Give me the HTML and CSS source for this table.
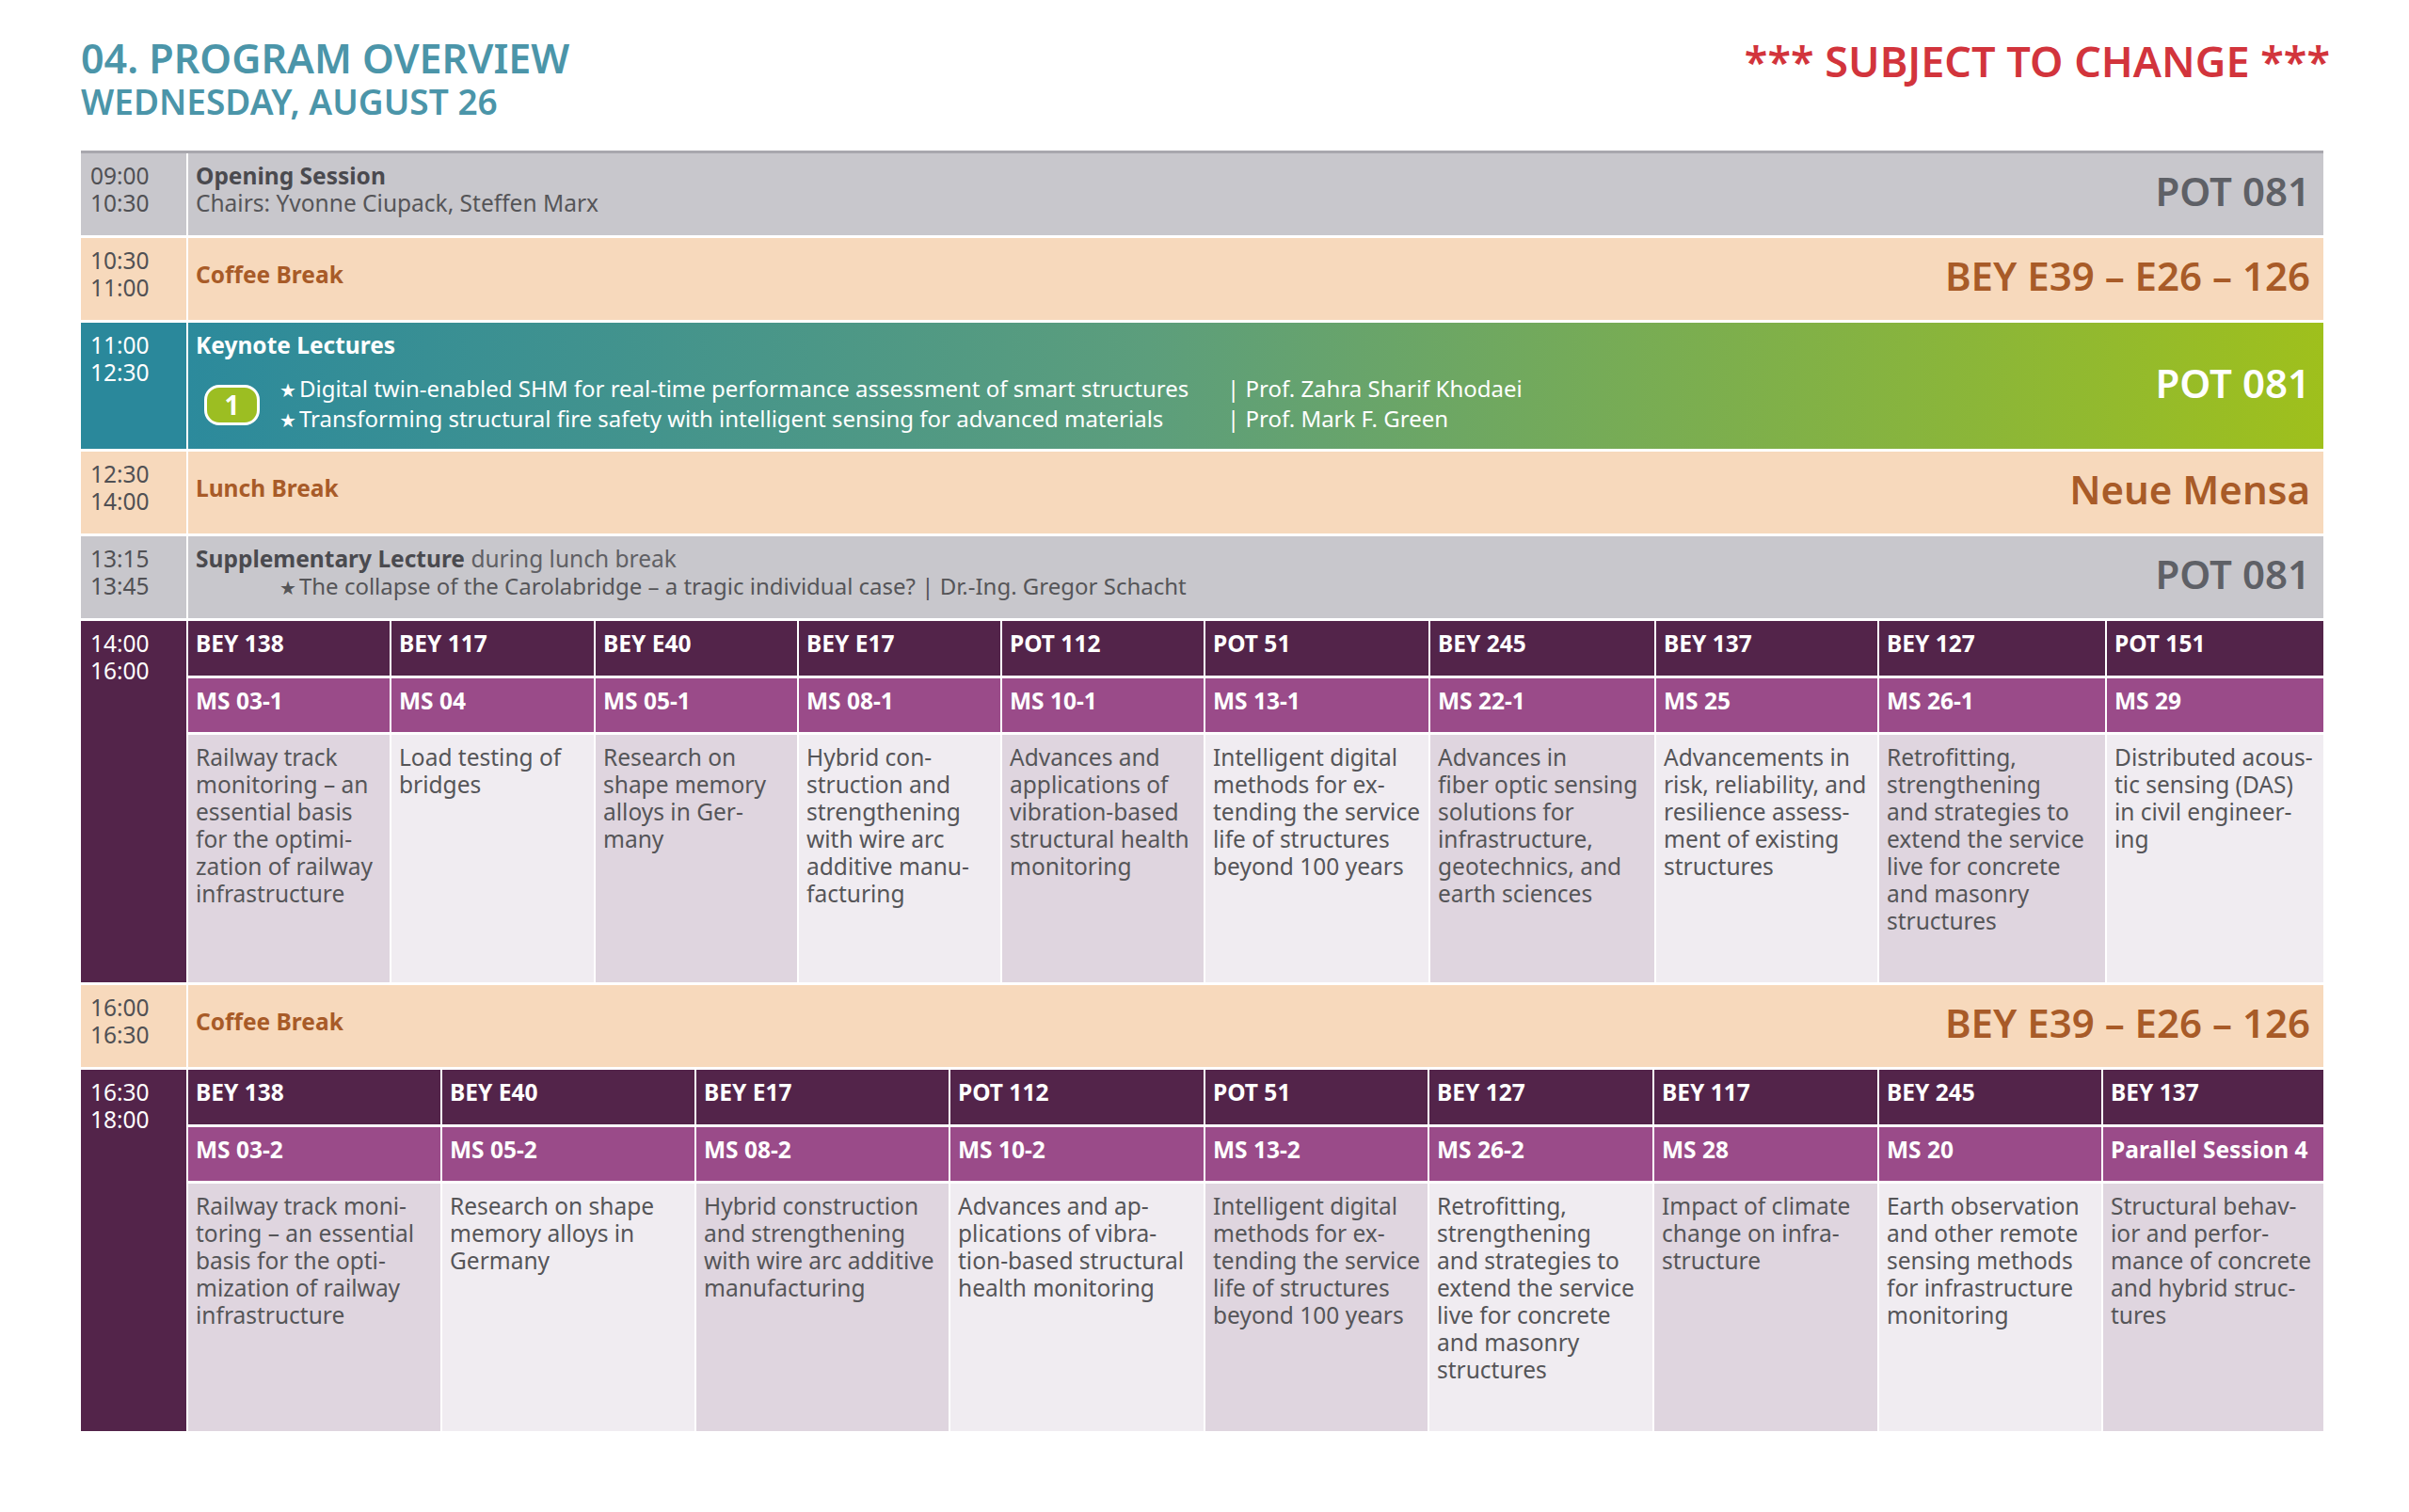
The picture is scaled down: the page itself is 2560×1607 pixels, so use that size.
FILE: index.html
```html
<!DOCTYPE html>
<html lang="en">
<head>
<meta charset="utf-8">
<title>04. Program Overview – Wednesday, August 26</title>
<link rel="stylesheet" href="styles.css">
</head>
<body>
<div class="page">
  <header class="top">
    <div class="titles">
      <h1 class="title">04. PROGRAM OVERVIEW</h1>
      <h2 class="subtitle">WEDNESDAY, AUGUST 26</h2>
    </div>
    <div class="notice">*** SUBJECT TO CHANGE ***</div>
  </header>

  <main class="schedule">
    <section class="row gray first">
      <div class="time">09:00<br>10:30</div>
      <div class="body">
        <div class="info">
          <div class="strong">Opening Session</div>
          <div>Chairs: Yvonne Ciupack, Steffen Marx</div>
        </div>
        <div class="room">POT 081</div>
      </div>
    </section>

    <section class="row peach">
      <div class="time">10:30<br>11:00</div>
      <div class="body">
        <div class="info single"><span class="strong">Coffee Break</span></div>
        <div class="room">BEY E39 – E26 – 126</div>
      </div>
    </section>

    <section class="row keynote">
      <div class="time">11:00<br>12:30</div>
      <div class="body">
        <div class="info">
          <div class="strong">Keynote Lectures</div>
          <div class="kn-lines">
            <div class="badge">1</div>
            <div class="talks">
              <div><span class="star">★</span>Digital twin-enabled SHM for real-time performance assessment of smart structures</div>
              <div>| Prof. Zahra Sharif Khodaei</div>
              <div><span class="star">★</span>Transforming structural fire safety with intelligent sensing for advanced materials</div>
              <div>| Prof. Mark F. Green</div>
            </div>
          </div>
        </div>
        <div class="room">POT 081</div>
      </div>
    </section>

    <section class="row peach">
      <div class="time">12:30<br>14:00</div>
      <div class="body">
        <div class="info single"><span class="strong">Lunch Break</span></div>
        <div class="room">Neue Mensa</div>
      </div>
    </section>

    <section class="row gray">
      <div class="time">13:15<br>13:45</div>
      <div class="body">
        <div class="info">
          <div><span class="strong">Supplementary Lecture</span> <span class="light">during lunch break</span></div>
          <div class="indent"><span class="star">★</span>The collapse of the Carolabridge – a tragic individual case? | Dr.-Ing. Gregor Schacht</div>
        </div>
        <div class="room">POT 081</div>
      </div>
    </section>

    <section class="row session">
      <div class="time">14:00<br>16:00</div>
      <div class="sgrid g1">
        <div class="rm">BEY 138</div>
        <div class="rm">BEY 117</div>
        <div class="rm">BEY E40</div>
        <div class="rm">BEY E17</div>
        <div class="rm">POT 112</div>
        <div class="rm">POT 51</div>
        <div class="rm">BEY 245</div>
        <div class="rm">BEY 137</div>
        <div class="rm">BEY 127</div>
        <div class="rm">POT 151</div>

        <div class="ms">MS 03-1</div>
        <div class="ms">MS 04</div>
        <div class="ms">MS 05-1</div>
        <div class="ms">MS 08-1</div>
        <div class="ms">MS 10-1</div>
        <div class="ms">MS 13-1</div>
        <div class="ms">MS 22-1</div>
        <div class="ms">MS 25</div>
        <div class="ms">MS 26-1</div>
        <div class="ms">MS 29</div>

        <div class="ct d">Railway track<br>monitoring – an<br>essential basis<br>for the optimi-<br>zation of railway<br>infrastructure</div>
        <div class="ct l">Load testing of<br>bridges</div>
        <div class="ct d">Research on<br>shape memory<br>alloys in Ger-<br>many</div>
        <div class="ct l">Hybrid con-<br>struction and<br>strengthening<br>with wire arc<br>additive manu-<br>facturing</div>
        <div class="ct d">Advances and<br>applications of<br>vibration-based<br>structural health<br>monitoring</div>
        <div class="ct l">Intelligent digital<br>methods for ex-<br>tending the service<br>life of structures<br>beyond 100 years</div>
        <div class="ct d">Advances in<br>fiber optic sensing<br>solutions for<br>infrastructure,<br>geotechnics, and<br>earth sciences</div>
        <div class="ct l">Advancements in<br>risk, reliability, and<br>resilience assess-<br>ment of existing<br>structures</div>
        <div class="ct d">Retrofitting,<br>strengthening<br>and strategies to<br>extend the service<br>live for concrete<br>and masonry<br>structures</div>
        <div class="ct l">Distributed acous-<br>tic sensing (DAS)<br>in civil engineer-<br>ing</div>
      </div>
    </section>

    <section class="row peach">
      <div class="time">16:00<br>16:30</div>
      <div class="body">
        <div class="info single"><span class="strong">Coffee Break</span></div>
        <div class="room">BEY E39 – E26 – 126</div>
      </div>
    </section>

    <section class="row session">
      <div class="time">16:30<br>18:00</div>
      <div class="sgrid g2">
        <div class="rm">BEY 138</div>
        <div class="rm">BEY E40</div>
        <div class="rm">BEY E17</div>
        <div class="rm">POT 112</div>
        <div class="rm">POT 51</div>
        <div class="rm">BEY 127</div>
        <div class="rm">BEY 117</div>
        <div class="rm">BEY 245</div>
        <div class="rm">BEY 137</div>

        <div class="ms">MS 03-2</div>
        <div class="ms">MS 05-2</div>
        <div class="ms">MS 08-2</div>
        <div class="ms">MS 10-2</div>
        <div class="ms">MS 13-2</div>
        <div class="ms">MS 26-2</div>
        <div class="ms">MS 28</div>
        <div class="ms">MS 20</div>
        <div class="ms">Parallel Session 4</div>

        <div class="ct d">Railway track moni-<br>toring – an essential<br>basis for the opti-<br>mization of railway<br>infrastructure</div>
        <div class="ct l">Research on shape<br>memory alloys in<br>Germany</div>
        <div class="ct d">Hybrid construction<br>and strengthening<br>with wire arc additive<br>manufacturing</div>
        <div class="ct l">Advances and ap-<br>plications of vibra-<br>tion-based structural<br>health monitoring</div>
        <div class="ct d">Intelligent digital<br>methods for ex-<br>tending the service<br>life of structures<br>beyond 100 years</div>
        <div class="ct l">Retrofitting,<br>strengthening<br>and strategies to<br>extend the service<br>live for concrete<br>and masonry<br>structures</div>
        <div class="ct d">Impact of climate<br>change on infra-<br>structure</div>
        <div class="ct l">Earth observation<br>and other remote<br>sensing methods<br>for infrastructure<br>monitoring</div>
        <div class="ct d">Structural behav-<br>ior and perfor-<br>mance of concrete<br>and hybrid struc-<br>tures</div>
      </div>
    </section>
  </main>
</div>
</body>
</html>
```

FILE: styles.css
```css
* {
  box-sizing: border-box;
  margin: 0;
  padding: 0;
}

html, body {
  background: #ffffff;
}

body {
  width: 2560px;
  height: 1607px;
  overflow: hidden;
  font-family: "Noto Sans", "Open Sans", "DejaVu Sans", sans-serif;
  font-size: 24.5px;
  line-height: 29px;
  color: #555558;
}

.page {
  width: 2469px;
  padding: 40px 0 0 86px;
}

/* ---------- header ---------- */
.top {
  display: flex;
  justify-content: space-between;
  align-items: flex-start;
  height: 120px;
  margin-right: -7px;
}

.titles {
  display: flex;
  flex-direction: column;
}

.title {
  font-size: 43px;
  line-height: 43px;
  font-weight: 600;
  color: #4b95a9;
}

.subtitle {
  margin-top: 6px;
  font-size: 37px;
  line-height: 37px;
  font-weight: 600;
  color: #4b95a9;
}

.notice {
  margin-top: 2px;
  font-size: 45px;
  line-height: 46px;
  font-weight: 600;
  color: #d2343c;
}

/* ---------- schedule ---------- */
.schedule {
  display: flex;
  flex-direction: column;
  gap: 3px;
  width: 2383px;
}

.row {
  display: flex;
  gap: 2px;
  height: 87px;
}

.row.first {
  height: 90px;
  border-top: 3px solid #a8a7ad;
}

.time {
  flex: none;
  width: 112px;
  padding: 9px 0 0 10px;
}

.body {
  flex: 1;
  display: flex;
  justify-content: space-between;
  align-items: center;
  padding: 0 14px 0 8px;
}

.info {
  align-self: flex-start;
  padding-top: 9px;
}

.info.single {
  display: flex;
  align-items: center;
  height: 67px;
}

.strong {
  font-weight: 700;
}

.room {
  margin-bottom: 7px;
  font-size: 42px;
  line-height: 42px;
  font-weight: 600;
  white-space: nowrap;
}

.star {
  font-family: "DejaVu Sans", sans-serif;
  font-size: 20px;
  margin-right: 3px;
}

/* gray rows */
.gray .time,
.gray .body {
  background: #c8c7cc;
}

.gray .time {
  color: #505054;
}

.gray .strong {
  color: #4a4a4f;
}

.gray .room {
  color: #5e6066;
}

.light {
  color: #606064;
}

.indent {
  padding-left: 89px;
  font-size: 24px;
}

/* peach rows */
.peach .time,
.peach .body {
  background: #f7d9bc;
}

.peach .time {
  color: #505054;
}

.peach .strong,
.peach .room {
  color: #a85b28;
}

/* keynote */
.row.keynote {
  height: 134px;
}

.keynote .time {
  background: #2a889b;
  color: #ffffff;
}

.keynote .body {
  background: linear-gradient(90deg, #2c8a9c 0%, #5c9e7c 45%, #9fc01c 100%);
  color: #ffffff;
}

.kn-lines {
  display: flex;
  align-items: center;
  margin-top: 17px;
}

.badge {
  flex: none;
  display: flex;
  align-items: center;
  justify-content: center;
  width: 59px;
  height: 43px;
  margin: 0 21px 0 9px;
  border: 3px solid #ffffff;
  border-radius: 16px;
  background: #9cbe22;
  color: #ffffff;
  font-size: 28px;
  font-weight: 700;
}

.talks {
  display: grid;
  grid-template-columns: 1007px auto;
  font-size: 24px;
  white-space: nowrap;
}

/* parallel sessions */
.row.session {
  height: 384px;
}

.session .time {
  background: #53244a;
  color: #ffffff;
}

.sgrid {
  flex: 1;
  display: grid;
  grid-template-rows: 58px 57px 1fr;
  row-gap: 3px;
  column-gap: 2px;
}

.g1 {
  grid-template-columns: 214px 215px 214px 214px 214px 237px 238px 235px 240px 230px;
}

.g2 {
  grid-template-columns: 268px 268px 268px 269px 236px 237px 237px 236px 234px;
}

.rm,
.ms,
.ct {
  padding: 9px 8px 0 8px;
  white-space: nowrap;
}

.rm {
  background: #53244a;
  color: #ffffff;
  font-weight: 700;
}

.ms {
  background: #9a4b89;
  color: #ffffff;
  font-weight: 700;
}

.ct {
  color: #555558;
}

.ct.d {
  background: #dfd5df;
}

.ct.l {
  background: #f0ecf1;
}
```
